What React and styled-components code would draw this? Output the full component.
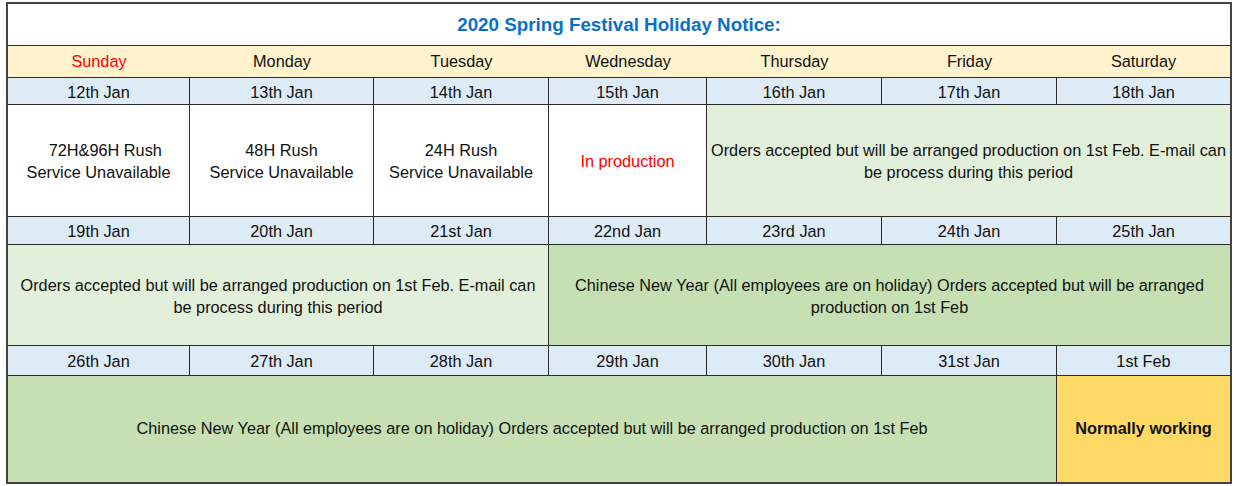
import React from "react";
import styled, { createGlobalStyle } from "styled-components";

const GlobalStyle = createGlobalStyle`
  body {
    margin: 0;
    background: #fff;
    font-family: "Liberation Sans", Arial, sans-serif;
  }
`;

const colors = {
  day: "#fff2cc",
  date: "#ddebf7",
  white: "#ffffff",
  light: "#e2efda",
  green: "#c6e0b4",
  yellow: "#ffd966",
};

const Sheet = styled.div`
  margin: 2px 0 0 6px;
  width: 1222px;
  border: 2px solid #444;
  display: grid;
  grid-template-columns: 182px 184px 175px 158px 175px 175px 173px;
  grid-template-rows: 42px 32px 27px 112px 28px 101px 30px 106px;
  color: #111;
  font-size: 16.3px;
`;

const Cell = styled.div`
  box-sizing: border-box;
  grid-column: span ${(p) => p.$span || 1};
  background: ${(p) => colors[p.$bg] || colors.white};
  border-right: ${(p) => (p.$last || p.$open ? "none" : "1px solid #2b2b2b")};
  border-bottom: ${(p) => (p.$bottom ? "none" : "1px solid #2b2b2b")};
  display: flex;
  align-items: center;
  justify-content: center;
  text-align: center;
  line-height: 22px;
  padding-top: ${(p) => (p.$nudge ? "1px" : "0")};
  padding-bottom: ${(p) => (p.$lift ? "2px" : "0")};
  color: ${(p) => (p.$red ? "#ff0000" : "#111")};
  font-weight: ${(p) => (p.$bold ? 700 : 400)};
  white-space: nowrap;
`;

const Title = styled(Cell)`
  color: #0b6fc7;
  font-weight: 700;
  font-size: 18.8px;
  padding-top: 1px;
`;

const days = ["Sunday", "Monday", "Tuesday", "Wednesday", "Thursday", "Friday", "Saturday"];

const DateRow = ({ items }) =>
  items.map((d, i) => (
    <Cell key={d} $bg="date" $nudge $last={i === items.length - 1}>
      {d}
    </Cell>
  ));

export default function App() {
  return (
    <>
      <GlobalStyle />
      <Sheet>
        <Title $span={7} $last>
          2020 Spring Festival Holiday Notice:
        </Title>

        {days.map((d, i) => (
          <Cell key={d} $bg="day" $open $lift $red={i === 0}>
            {d}
          </Cell>
        ))}

        <DateRow items={["12th Jan", "13th Jan", "14th Jan", "15th Jan", "16th Jan", "17th Jan", "18th Jan"]} />

        <Cell $nudge>
          {"\u00a0\u00a0\u00a072H&96H Rush"}
          <br />
          Service Unavailable
        </Cell>
        <Cell $nudge>
          48H Rush
          <br />
          Service Unavailable
        </Cell>
        <Cell $nudge>
          24H Rush
          <br />
          Service Unavailable
        </Cell>
        <Cell $red $nudge>In production</Cell>
        <Cell $span={3} $bg="light" $last $nudge>
          Orders accepted but will be arranged production on 1st Feb. E-mail can
          <br />
          be process during this period
        </Cell>

        <DateRow items={["19th Jan", "20th Jan", "21st Jan", "22nd Jan", "23rd Jan", "24th Jan", "25th Jan"]} />

        <Cell $span={3} $bg="light" $nudge>
          Orders accepted but will be arranged production on 1st Feb. E-mail can
          <br />
          be process during this period
        </Cell>
        <Cell $span={4} $bg="green" $last $nudge>
          Chinese New Year (All employees are on holiday) Orders accepted but will be arranged
          <br />
          production on 1st Feb
        </Cell>

        <DateRow items={["26th Jan", "27th Jan", "28th Jan", "29th Jan", "30th Jan", "31st Jan", "1st Feb"]} />

        <Cell $span={6} $bg="green" $bottom $lift>
          Chinese New Year (All employees are on holiday) Orders accepted but will be arranged production on 1st Feb
        </Cell>
        <Cell $bg="yellow" $bold $last $bottom $lift>
          Normally working
        </Cell>
      </Sheet>
    </>
  );
}
